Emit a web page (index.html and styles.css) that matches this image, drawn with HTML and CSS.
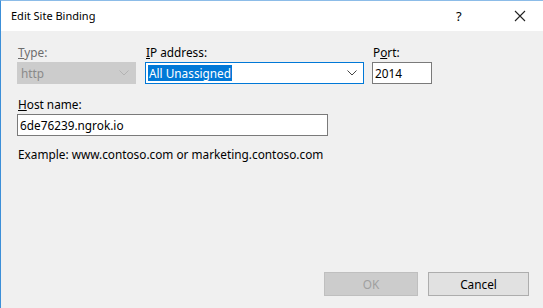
FILE: index.html
```html
<!DOCTYPE html>
<html lang="en">
<head>
    <meta charset="UTF-8">
    <title>Edit Site Binding</title>
    <link rel="stylesheet" href="styles.css">
</head>
<body>
    <div class="dialog">
        <div class="title-bar">
            <div class="title">Edit Site Binding</div>
            <div class="help">?</div>
            <div class="close">
                <svg width="12" height="12" viewBox="0 0 12 12"><path d="M1 1 L11 11 M11 1 L1 11" stroke="#222" stroke-width="1.1" fill="none"/></svg>
            </div>
        </div>

        <div class="content">
            <div class="field-row">
                <div class="field type-field">
                    <div class="label disabled-label"><u>T</u>ype:</div>
                    <div class="select disabled">
                        <span>http</span>
                        <svg class="chevron" width="10" height="6" viewBox="0 0 10 6"><path d="M0.5 0.5 L5 5 L9.5 0.5" stroke="#b3b3b3" fill="none"/></svg>
                    </div>
                </div>
                <div class="field ip-field">
                    <div class="label"><u>I</u>P address:</div>
                    <div class="select focused">
                        <span class="selected-text">All Unassigned</span>
                        <svg class="chevron" width="10" height="6" viewBox="0 0 10 6"><path d="M0.5 0.5 L5 5 L9.5 0.5" stroke="#444" fill="none"/></svg>
                    </div>
                </div>
                <div class="field port-field">
                    <div class="label">P<u>o</u>rt:</div>
                    <div class="input">2014</div>
                </div>
            </div>

            <div class="field host-field">
                <div class="label"><u>H</u>ost name:</div>
                <div class="input">6de76239.ngrok.io</div>
            </div>
            <div class="example">Example: www.contoso.com or marketing.contoso.com</div>

            <div class="buttons">
                <div class="button ok">OK</div>
                <div class="button cancel">Cancel</div>
            </div>
        </div>
    </div>
</body>
</html>
```

FILE: styles.css
```css
body {
    margin: 0;
    padding: 0;
    font-family: "Noto Sans", sans-serif;
    font-size: 11.8px;
    color: #000;
    overflow: hidden;
}
.dialog {
    width: 542px;
    height: 307px;
    border-left: 1px solid #3c8fd8;
    border-top: 1px solid #8cbce8;
    background-color: #f0f0f0;
    display: flex;
    flex-direction: column;
}
.title-bar {
    height: 30px;
    background-color: #fff;
    display: flex;
    align-items: center;
    padding-left: 10px;
}
.title {
    flex: 1;
    margin-top: -1px;
    font-size: 11px;
}
.help {
    width: 20px;
    margin-right: 38px;
    font-size: 13px;
}
.close {
    width: 12px;
    margin-right: 17px;
    display: flex;
}
.content {
    flex: 1;
    display: flex;
    flex-direction: column;
    padding: 14px 14px 12px 16px;
}
.field-row {
    display: flex;
    gap: 9px;
}
.field {
    display: flex;
    flex-direction: column;
}
.label {
    height: 17px;
    line-height: 15px;
    padding-left: 1px;
}
.disabled-label {
    color: #6d6d6d;
}
.type-field { width: 119px; }
.ip-field { width: 219px; }
.port-field { width: 60px; margin-left: -1px; }
.select, .input {
    height: 20px;
    border: 1px solid #7a7a7a;
    background-color: #fff;
    display: flex;
    align-items: center;
    padding: 0 2px;
}
.select span {
    flex: 1;
}
.select.disabled {
    background-color: #cccccc;
    border-color: #cccccc;
    color: #8a8a8a;
    padding-left: 3px;
}
.select.focused {
    border-color: #0078d7;
}
.selected-text {
    flex: 0 0 auto !important;
    background-color: #0078d7;
    color: #fff;
    padding: 0 1px;
    line-height: 16px;
}
.chevron {
    margin-left: auto;
    margin-right: 4px;
}
.host-field {
    margin-top: 13px;
    width: 311px;
}
.example {
    margin-top: 10px;
    padding-left: 1px;
}
.buttons {
    margin-top: auto;
    display: flex;
    justify-content: flex-end;
    gap: 10px;
}
.button {
    width: 92px;
    height: 22px;
    line-height: 22px;
    text-align: center;
    border: 1px solid #adadad;
    background-color: #e1e1e1;
}
.button.ok {
    background-color: #cccccc;
    border-color: #bfbfbf;
    color: #a0a0a0;
}
.button.cancel {
    width: 99px;
}
```
